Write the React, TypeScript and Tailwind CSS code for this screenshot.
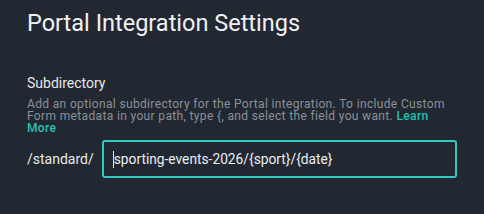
export default function App() {
  return (
    <div className="w-[484px] h-[214px] bg-[#222832] text-[#e8e9eb] px-[27px] pt-[8px]" style={{ fontFamily: 'Roboto, "Noto Sans", sans-serif' }}>
      <h1 className="text-[23.5px] leading-[30px] text-[#f0f1f2]">Portal Integration Settings</h1>
      <div className="mt-[36px]">
        <div className="text-[14px] leading-[18px] text-[#e6e7e9]">Subdirectory</div>
        <p className="mt-[6px] w-[424px] text-[12px] leading-[12px] tracking-[0.35px] text-[#8b9097]">
          Add an optional subdirectory for the Portal integration. To include Custom Form metadata in your path, type {'{'}, and select the field you want.{' '}
          <a className="text-[#27c1b3] font-medium">Learn More</a>
        </p>
        <div className="mt-[6px] flex items-center gap-[8px]">
          <span className="text-[14px] text-[#e6e7e9]">/standard/</span>
          <div className="w-[355px] h-[38px] rounded-[3px] border-2 border-[#2ccbbd] flex items-center pl-[9px] text-[13.75px] text-[#eceef0]">
            <span className="w-px h-[17px] bg-[#e6e7e9]"></span>
            <span>sporting-events-2026/{'{sport}'}/{'{date}'}</span>
          </div>
        </div>
      </div>
    </div>
  );
}
